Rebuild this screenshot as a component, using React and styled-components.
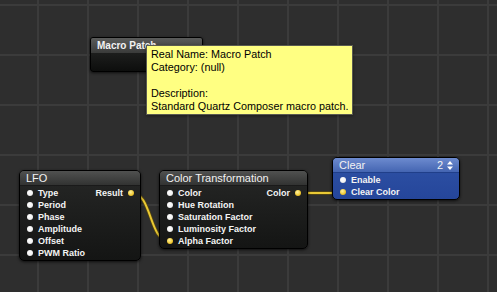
import React from "react";
import styled, { createGlobalStyle, css } from "styled-components";

const GlobalStyle = createGlobalStyle`
  html, body {
    margin: 0;
    padding: 0;
    background: #2e2e2e;
  }
  * {
    box-sizing: border-box;
  }
`;

const nodes = [
  {
    id: "lfo",
    title: "LFO",
    x: 19,
    y: 170,
    width: 122,
    inputs: [
      { name: "Type" },
      { name: "Period" },
      { name: "Phase" },
      { name: "Amplitude" },
      { name: "Offset" },
      { name: "PWM Ratio" },
    ],
    outputs: [{ name: "Result", linked: true }],
  },
  {
    id: "color",
    title: "Color Transformation",
    x: 159,
    y: 170,
    width: 149,
    inputs: [
      { name: "Color" },
      { name: "Hue Rotation" },
      { name: "Saturation Factor" },
      { name: "Luminosity Factor" },
      { name: "Alpha Factor", linked: true },
    ],
    outputs: [{ name: "Color", linked: true }],
  },
  {
    id: "clear",
    title: "Clear",
    x: 332,
    y: 157,
    width: 128,
    blue: true,
    layer: "2",
    inputs: [{ name: "Enable" }, { name: "Clear Color", linked: true }],
    outputs: [],
  },
];

function Port({ port, output }) {
  return (
    <PortRow output={output}>
      {!output && <Dot linked={port.linked} />}
      <PortLabel>{port.name}</PortLabel>
      {output && <Dot linked={port.linked} />}
    </PortRow>
  );
}

function Node({ node }) {
  return (
    <NodeBox left={node.x} top={node.y} width={node.width} blue={node.blue}>
      <TitleBar blue={node.blue}>
        <TitleText>{node.title}</TitleText>
        {node.layer && (
          <Layer>
            {node.layer}
            <svg width="6" height="9" viewBox="0 0 6 9">
              <path d="M3 0 L6 3.5 L0 3.5 Z M3 9 L6 5.5 L0 5.5 Z" fill="#fff" />
            </svg>
          </Layer>
        )}
      </TitleBar>
      <Body>
        <Column>
          {node.inputs.map((p) => (
            <Port key={p.name} port={p} />
          ))}
        </Column>
        <Column>
          {node.outputs.map((p) => (
            <Port key={p.name} port={p} output />
          ))}
        </Column>
      </Body>
    </NodeBox>
  );
}

function App() {
  return (
    <>
      <GlobalStyle />
      <Canvas>
        <Wires width="497" height="292">
          <path
            d="M132 193 C 152 193, 149 241, 169 241"
            stroke="#5a4a10"
            strokeWidth="3.4"
            fill="none"
          />
          <path
            d="M132 193 C 152 193, 149 241, 169 241"
            stroke="#eac935"
            strokeWidth="2"
            fill="none"
          />
          <path d="M299 193 L341 193" stroke="#5a4a10" strokeWidth="3.4" />
          <path d="M299 193 L341 193" stroke="#eac935" strokeWidth="2" />
        </Wires>

        <MacroPatch>
          <MacroTitle>Macro Patch</MacroTitle>
        </MacroPatch>

        {nodes.map((n) => (
          <Node key={n.id} node={n} />
        ))}

        <Tooltip>
          <div>Real Name: Macro Patch</div>
          <div>Category: (null)</div>
          <div>&nbsp;</div>
          <div>Description:</div>
          <div>Standard Quartz Composer macro patch.</div>
        </Tooltip>
      </Canvas>
    </>
  );
}

export default App;

const Canvas = styled.div`
  position: relative;
  width: 497px;
  height: 292px;
  overflow: hidden;
  background-color: #2e2e2e;
  background-image: linear-gradient(to right, #3b3b3b 2px, transparent 2px),
    linear-gradient(to bottom, #3b3b3b 2px, transparent 2px);
  background-size: 50px 50px;
  background-position: 37px 4px;
  font-family: "Liberation Sans", Arial, sans-serif;
`;

const Wires = styled.svg`
  position: absolute;
  left: 0;
  top: 0;
  z-index: 1;
`;

const NodeBox = styled.div`
  ${(props) => css`
    position: absolute;
    left: ${props.left}px;
    top: ${props.top}px;
    width: ${props.width}px;
    z-index: 2;
    display: flex;
    flex-direction: column;
    border: 1px solid #000;
    border-radius: 5px;
    overflow: hidden;
    box-shadow: 0 1px 3px rgba(0, 0, 0, 0.7);
    background: ${props.blue
      ? "linear-gradient(to bottom, #2f52a6, #25469a)"
      : "linear-gradient(to bottom, #262726, #141514)"};
  `}
`;

const TitleBar = styled.div`
  display: flex;
  align-items: center;
  justify-content: space-between;
  height: 15px;
  padding: 0 6px;
  border-bottom: 1px solid ${(props) => (props.blue ? "#203f8a" : "#1a1a1a")};
  background: ${(props) =>
    props.blue
      ? "linear-gradient(to bottom, #6d8bcf, #4465b2)"
      : "linear-gradient(to bottom, #505150, #323332)"};
`;

const TitleText = styled.span`
  color: #f2f2f2;
  font-size: 11px;
  line-height: 15px;
  white-space: nowrap;
`;

const Layer = styled.span`
  display: flex;
  align-items: center;
  gap: 4px;
  color: #f2f2f2;
  font-size: 11px;
  line-height: 15px;
`;

const Body = styled.div`
  display: flex;
  justify-content: space-between;
  padding: 1px 0 1px 0;
`;

const Column = styled.div`
  display: flex;
  flex-direction: column;
`;

const PortRow = styled.div`
  display: flex;
  align-items: center;
  height: 12px;
  gap: 5px;
  padding: ${(props) => (props.output ? "0 6px 0 0" : "0 0 0 7px")};
`;

const Dot = styled.span`
  width: 6px;
  height: 6px;
  border-radius: 50%;
  flex-shrink: 0;
  background: ${(props) =>
    props.linked
      ? "radial-gradient(circle at 40% 35%, #fff3a0, #f0c832 60%, #c89a10)"
      : "radial-gradient(circle at 40% 35%, #ffffff, #f2f2f2 60%, #b8b8b8)"};
`;

const PortLabel = styled.span`
  color: #f4f4f4;
  font-size: 9px;
  font-weight: bold;
  line-height: 12px;
  white-space: nowrap;
`;

const MacroPatch = styled.div`
  position: absolute;
  left: 90px;
  top: 37px;
  width: 113px;
  height: 35px;
  z-index: 2;
  border: 1px solid #000;
  border-radius: 3px;
  box-shadow: 0 1px 3px rgba(0, 0, 0, 0.7);
  background: linear-gradient(to bottom, #2a2b2a, #0d0e0d);
  overflow: hidden;
`;

const MacroTitle = styled.div`
  height: 15px;
  padding: 0 6px;
  color: #f2f2f2;
  font-size: 10px;
  font-weight: bold;
  line-height: 16px;
  background: linear-gradient(to bottom, #5a5b5a, #3a3b3a);
`;

const Tooltip = styled.div`
  position: absolute;
  left: 146px;
  top: 45px;
  width: 207px;
  height: 70px;
  z-index: 3;
  padding: 2px 4px 0;
  background: #ffff82;
  border: 1px solid #5a5a50;
  color: #000;
  font-size: 10.8px;
  line-height: 13px;
  white-space: nowrap;
  box-shadow: 0 1px 3px rgba(0, 0, 0, 0.4);
`;
